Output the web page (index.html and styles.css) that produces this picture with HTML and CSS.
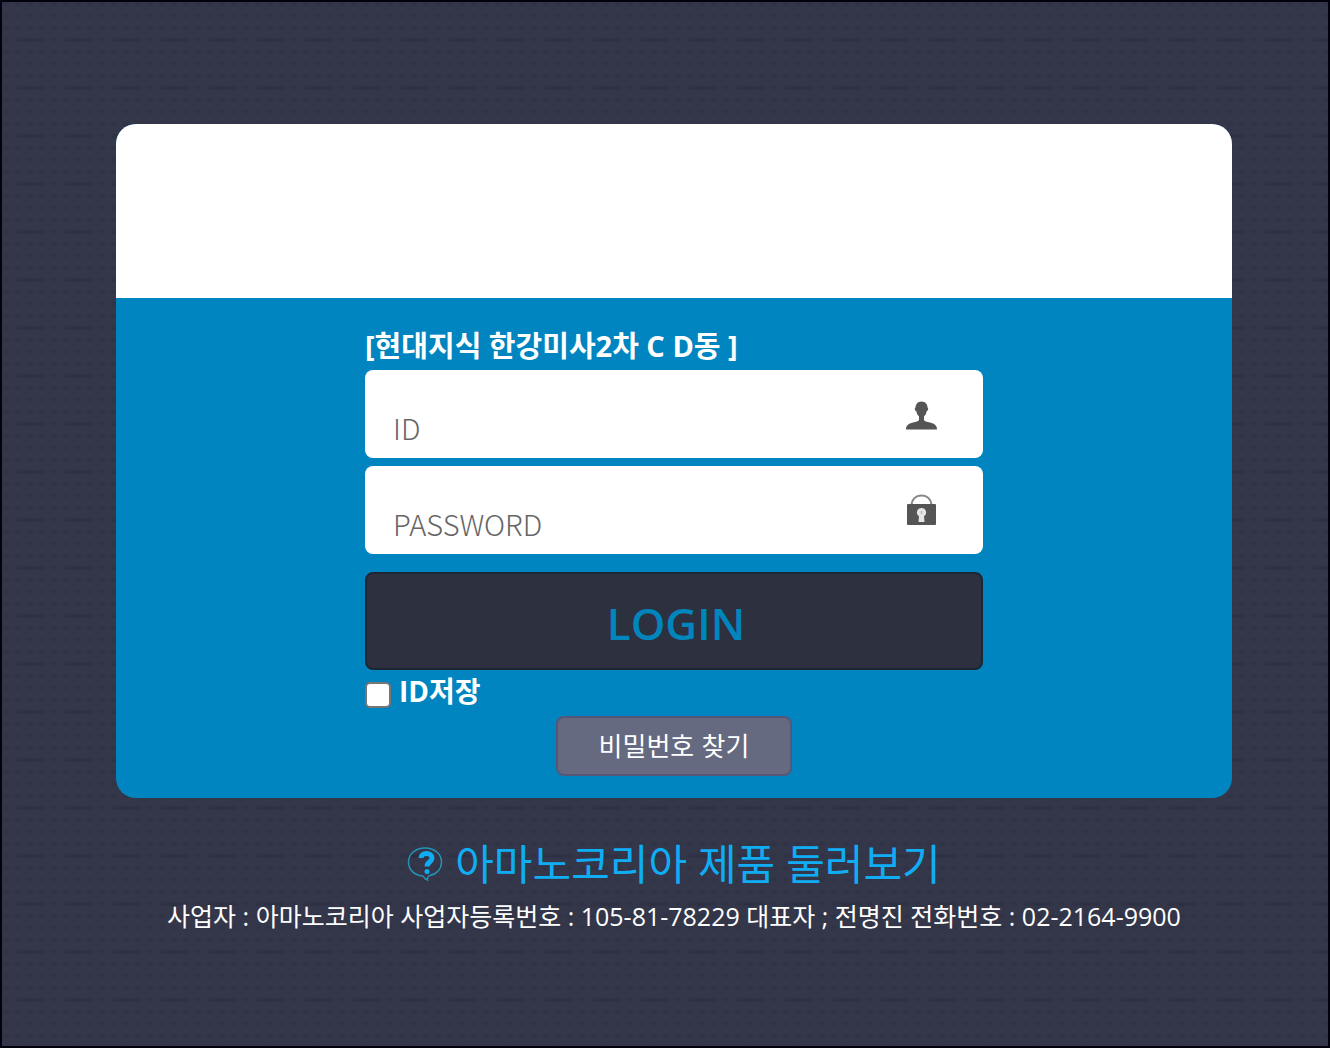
FILE: index.html
```html
<!DOCTYPE html>
<html lang="ko">
<head>
  <meta charset="UTF-8">
  <meta name="viewport" content="width=device-width, initial-scale=1.0">
  <title>LOGIN</title>
  <link rel="stylesheet" href="styles.css">
</head>
<body>
  <main class="page">
    <div class="card">
      <div class="card-header"></div>
      <form class="login-form" onsubmit="return false">
        <h1 class="site-name">[현대지식 한강미사2차 C D동 ]</h1>
        <div class="field">
          <input type="text" id="userId" name="userId" placeholder="ID" aria-label="ID">
          <svg class="field-icon" viewBox="0 0 32 32" aria-hidden="true">
            <path d="M16.500 3.500c-4 0-6 3-6 6-1 0-1 3 1 4 0 2 1.500 4 2.500 5v3c0 2-3 2-6 3-4.500 1-7 3-7 7h31c0-4-2.500-6-7-7-3-1-6-1-6-3v-3c1-1 2.500-3 2.500-5 2-1 2-4 1-4 0-3-2-6-6-6z" fill="#555"/>
          </svg>
        </div>
        <div class="field">
          <input type="password" id="userPwd" name="userPwd" placeholder="PASSWORD" aria-label="PASSWORD">
          <svg class="field-icon" viewBox="0 0 32 32" aria-hidden="true">
            <path d="M6.500 13v-1C6.500 5 11 1.500 16.500 1.500S26.500 5 26.500 12v1" fill="none" stroke="#888" stroke-width="2"/>
            <rect x="2" y="10" width="29" height="21" rx="1" fill="#555"/>
            <path d="M16.500 14a4.500 4.500 0 0 0-2.500 8.300L13.500 28h6l-.5-5.700A4.500 4.500 0 0 0 16.500 14z" fill="#e4e4e4"/>
            <path d="M16.500 17v3" stroke="#bbb" stroke-width="1.500"/>
          </svg>
        </div>
        <button type="submit" class="btn-login">LOGIN</button>
        <div class="save-id">
          <input type="checkbox" id="saveId" name="saveId">
          <label for="saveId">ID저장</label>
        </div>
        <button type="button" class="btn-find">비밀번호 찾기</button>
      </form>
    </div>
    <footer class="footer">
      <a href="#" class="tour-link">
        <svg class="tour-icon" viewBox="0 0 36 36" aria-hidden="true">
          <path d="M18 2C8.500 2 1.500 8 1.500 16c0 8 6 13 14 14 2 0 1 3 5 4-1-2 0-3 2-4.500 7-1 12-6.500 12-13.500C34.500 8 27.500 2 18 2z" fill="none" stroke="#2592b4" stroke-width="1.500"/>
          <path d="M14 12c0-3 2.500-4.500 5.500-4.500S25 9 25 12c0 4-5 4-5 8.500" fill="none" stroke="#10adf5" stroke-width="5"/>
          <circle cx="20" cy="25.500" r="2.500" fill="#10adf5"/>
        </svg>
        <span>아마노코리아 제품 둘러보기</span>
      </a>
      <p class="company">사업자 : 아마노코리아 사업자등록번호 : 105-81-78229 대표자 ; 전명진 전화번호 : 02-2164-9900</p>
    </footer>
  </main>
</body>
</html>
```
FILE: styles.css
```css
* {
  box-sizing: border-box;
}

body {
  margin: 0;
  min-height: 100vh;
  border: 2px solid #02020f;
  background-color: #333749;
  /* woven texture: a dash every 48px over rows of dots */
  background-image:
    radial-gradient(ellipse 17px 3px at 30px 40px, rgba(38, 38, 60, 0.5), transparent),
    radial-gradient(ellipse 5px 3px at 6px 4px, rgba(38, 38, 60, 0.3), transparent);
  background-size: 48px 48px, 12px 12px;
  font-family: "Open Sans", "Noto Sans CJK KR", sans-serif;
}

.page {
  padding: 122px 96px 40px 114px;
}

.card {
  border-radius: 20px;
  overflow: hidden;
  background-color: #0085c0;
}

.card-header {
  height: 174px;
  background-color: #fff;
}

.login-form {
  display: flex;
  flex-direction: column;
  width: 56%;
  max-width: 618px;
  margin: 0 auto;
  padding: 28px 0 22px;
}

.site-name {
  margin: 0 0 4px;
  color: #fff;
  font-size: 29px;
  line-height: 40px;
}

.field {
  display: flex;
  align-items: center;
  height: 88px;
  margin-bottom: 8px;
  padding-right: 46px;
  border-radius: 8px;
  background-color: #fff;
}

.field input {
  flex: 1;
  min-width: 0;
  height: 100%;
  padding: 26px 0 0 28px;
  border: none;
  outline: none;
  background: transparent;
  color: #444;
  font-family: "Noto Sans CJK KR", sans-serif;
  font-size: 29px;
  font-weight: 300;
}

.field input::placeholder {
  color: #666;
}

.field-icon {
  width: 32px;
  height: 32px;
}

.btn-login {
  height: 98px;
  margin-top: 10px;
  padding: 4px 0 0 4px;
  border: 2px solid #1d2633;
  border-radius: 8px;
  background-color: #2d303f;
  color: #0085bd;
  font-family: inherit;
  font-size: 44px;
  font-weight: 600;
  cursor: pointer;
}

.save-id {
  display: flex;
  align-items: center;
  gap: 8px;
  height: 46px;
  color: #fff;
  font-size: 28px;
  font-weight: bold;
  line-height: 40px;
}

.save-id label {
  padding-bottom: 4px;
}

.save-id input {
  appearance: none;
  width: 26px;
  height: 26px;
  margin: 4px 0 0;
  border: 2px solid #767676;
  border-radius: 5px;
  background-color: #fff;
}

.save-id input:checked {
  background-color: #2d303f;
}

.btn-find {
  align-self: center;
  width: 236px;
  height: 60px;
  padding: 0 0 4px;
  border: 2px solid #565778;
  border-radius: 8px;
  background-color: #666a80;
  color: #fff;
  font-family: "Noto Sans CJK KR", sans-serif;
  font-size: 26px;
  cursor: pointer;
}

.footer {
  padding-top: 36px;
  text-align: center;
}

.tour-link {
  display: inline-flex;
  align-items: center;
  gap: 12px;
  color: #10adf5;
  font-size: 42px;
  line-height: 60px;
  text-decoration: none;
}

.tour-icon {
  width: 36px;
  height: 36px;
}

.company {
  margin: 0;
  color: #fff;
  font-size: 25px;
  line-height: 44px;
}
```
